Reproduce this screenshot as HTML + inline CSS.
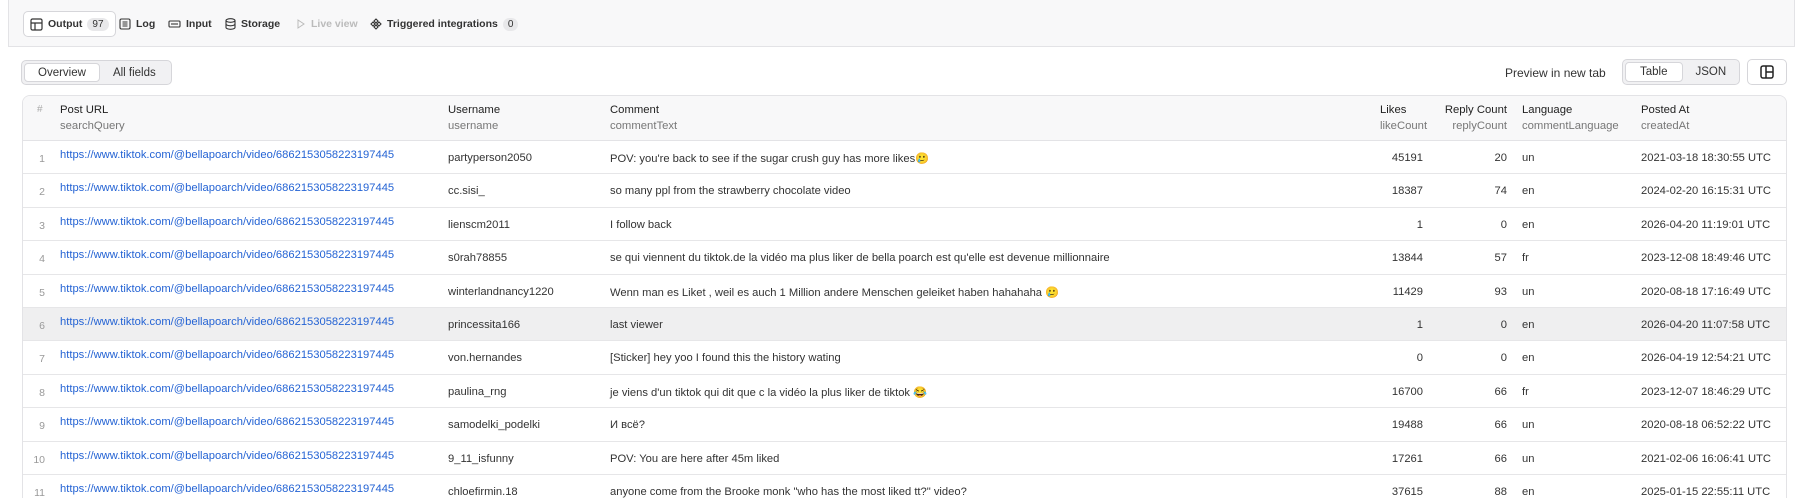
<!DOCTYPE html>
<html style="width:1800px;height:498px;overflow:hidden"><head><meta charset="utf-8"><style>
*{box-sizing:border-box;margin:0;padding:0}
body{width:1800px;height:498px;overflow:hidden;background:#fff;font-family:"Liberation Sans","Noto Sans CJK SC",sans-serif;color:#333;position:relative}
.top{position:absolute;left:8px;top:0;width:1787px;height:47px;background:#f8f8f9;border-left:1px solid #e3e3e6;border-right:1px solid #e3e3e6;border-bottom:1px solid #e3e3e6}
.tab{position:absolute;top:11px;height:26px;display:flex;align-items:center;font-size:10.5px;font-weight:bold;color:#333;gap:5px}
.tab.act{border:1px solid #d6d6da;border-radius:5px;background:#fff;padding:0 6px}
.badge{background:#e8e8ea;border-radius:8px;padding:1px 5px;font-weight:normal;font-size:10px}
.seg{position:absolute;border:1px solid #d6d6da;border-radius:5px;background:#f1f1f3;display:flex;padding:2px;font-size:11.5px}
.seg div{padding:0 13px;display:flex;align-items:center}
.seg .on{background:#fff;border:1px solid #d6d6da;border-radius:4px}
.tbl{position:absolute;left:22px;top:95px;width:1765px;height:403px;border:1px solid #e3e3e6;border-bottom:none;border-radius:8px 8px 0 0;overflow:hidden}
.hdr{position:absolute;left:0;top:0;width:100%;height:45px;background:#f8f8f9;border-bottom:1px solid #e3e3e6}
.c{position:absolute;white-space:nowrap;font-size:11.2px}
.h1{font-size:11.3px;color:#222;top:8px}
.h2{font-size:11.3px;color:#777;top:24px}
.row{position:absolute;left:0;width:100%;height:33.4px;border-bottom:1px solid #e6e6e8}
.row .c{top:11px}
.n{color:#999;font-size:10.5px;text-align:right;width:22px;left:0}
a{color:#2463d4;text-decoration:none}
.r{text-align:right}
</style></head><body>
<div class="top">
 <div class="tab act" style="left:14px"><svg width="13" height="13" viewBox="0 0 13 13" fill="none" stroke="#333" stroke-width="1.2"><rect x="1" y="1" width="11" height="11" rx="1.5"/><path d="M1 5h11M5 5v7"/></svg>Output <span class="badge">97</span></div>
 <div class="tab" style="left:110px"><svg width="12" height="12" viewBox="0 0 12 12" fill="none" stroke="#333" stroke-width="1.1"><rect x="1" y="1" width="10" height="10" rx="1.5"/><path d="M3.5 4h5M3.5 6h5M3.5 8h5"/></svg>Log</div>
 <div class="tab" style="left:159px"><svg width="13" height="12" viewBox="0 0 13 12" fill="none" stroke="#333" stroke-width="1.1"><rect x="1" y="3" width="11" height="6" rx="1"/><path d="M3 6h7"/></svg>Input</div>
 <div class="tab" style="left:216px"><svg width="11" height="12" viewBox="0 0 11 12" fill="none" stroke="#333" stroke-width="1.1"><ellipse cx="5.5" cy="2.5" rx="4.5" ry="1.8"/><path d="M1 2.5v7c0 1 2 1.8 4.5 1.8s4.5-.8 4.5-1.8v-7M1 6c0 1 2 1.8 4.5 1.8S10 7 10 6"/></svg>Storage</div>
 <div class="tab" style="left:287px;color:#bbb"><svg width="10" height="10" viewBox="0 0 10 10" fill="none" stroke="#bbb"><path d="M2 1l6 4-6 4z"/></svg>Live view</div>
 <div class="tab" style="left:361px"><svg width="12" height="12" viewBox="0 0 12 12" fill="none" stroke="#333" stroke-width="1.1"><path d="M6 1l2 2-2 2-2-2zM3 4l2 2-2 2-2-2zM9 4l2 2-2 2-2-2zM6 7l2 2-2 2-2-2z"/></svg>Triggered integrations <span class="badge">0</span></div>
</div>
<div class="seg" style="left:21px;top:60px;height:25px"><div class="on">Overview</div><div>All fields</div></div>
<div style="position:absolute;left:1505px;top:66px;font-size:12px">Preview in new tab</div>
<div class="seg" style="left:1622px;top:59px;height:26px;width:118px"><div class="on" style="padding:0 14px">Table</div><div>JSON</div></div>
<div style="position:absolute;left:1747px;top:59px;width:40px;height:26px;border:1px solid #d6d6da;border-radius:5px;display:flex;align-items:center;justify-content:center"><svg width="14" height="14" viewBox="0 0 14 14" fill="none" stroke="#222" stroke-width="1.5"><rect x="1" y="1" width="12" height="12" rx="2"/><path d="M6 1v12M6 7h7"/></svg></div>
<div class="tbl">
 <div class="hdr">
  <div class="c h1" style="left:14px;color:#aaa;font-size:10px;top:8px">#</div>
  <div class="c h1" style="left:37px">Post URL</div><div class="c h2" style="left:37px">searchQuery</div>
  <div class="c h1" style="left:425px">Username</div><div class="c h2" style="left:425px">username</div>
  <div class="c h1" style="left:587px">Comment</div><div class="c h2" style="left:587px">commentText</div>
  <div class="c h1" style="left:1357px">Likes</div><div class="c h2" style="left:1357px">likeCount</div>
  <div class="c h1 r" style="right:279px">Reply Count</div><div class="c h2 r" style="right:279px">replyCount</div>
  <div class="c h1" style="left:1499px">Language</div><div class="c h2" style="left:1499px">commentLanguage</div>
  <div class="c h1" style="left:1618px">Posted At</div><div class="c h2" style="left:1618px">createdAt</div>
 </div>
 <div id="rows"></div>
</div>
<script>
var d=[["partyperson2050","POV: you're back to see if the sugar crush guy has more likes\u{1F972}","45191","20","un","2021-03-18 18:30:55 UTC"],
["cc.sisi_","so many ppl from the strawberry chocolate video","18387","74","en","2024-02-20 16:15:31 UTC"],
["lienscm2011","I follow back","1","0","en","2026-04-20 11:19:01 UTC"],
["s0rah78855","se qui viennent du tiktok.de la vidéo ma plus liker de bella poarch est qu'elle est devenue millionnaire","13844","57","fr","2023-12-08 18:49:46 UTC"],
["winterlandnancy1220","Wenn man es Liket , weil es auch 1 Million andere Menschen geleiket haben hahahaha \u{1F972}","11429","93","un","2020-08-18 17:16:49 UTC"],
["princessita166","last viewer","1","0","en","2026-04-20 11:07:58 UTC"],
["von.hernandes","[Sticker] hey yoo I found this the history wating","0","0","en","2026-04-19 12:54:21 UTC"],
["paulina_rng","je viens d'un tiktok qui dit que c la vidéo la plus liker de tiktok \u{1F602}","16700","66","fr","2023-12-07 18:46:29 UTC"],
["samodelki_podelki","И всё?","19488","66","un","2020-08-18 06:52:22 UTC"],
["9_11_isfunny","POV: You are here after 45m liked","17261","66","un","2021-02-06 16:06:41 UTC"],
["chloefirmin.18","anyone come from the Brooke monk \"who has the most liked tt?\" video?","37615","88","en","2025-01-15 22:55:11 UTC"]];
var h="";
d.forEach(function(r,i){var t=45+i*33.4;
h+='<div class="row" style="top:'+t+'px;'+(i==5?'background:#efeff0':'')+'">'+
'<div class="c n" style="top:12px">'+(i+1)+'</div>'+
'<div class="c" style="left:37px;top:8px"><a>https://www.tiktok.com/@bellapoarch/video/6862153058223197445</a></div>'+
'<div class="c" style="left:425px">'+r[0]+'</div>'+
'<div class="c" style="left:587px">'+r[1].replace(/</g,"&lt;")+'</div>'+
'<div class="c r" style="right:363px">'+r[2]+'</div>'+
'<div class="c r" style="right:279px">'+r[3]+'</div>'+
'<div class="c" style="left:1499px">'+r[4]+'</div>'+
'<div class="c" style="left:1618px">'+r[5]+'</div></div>';});
document.getElementById("rows").innerHTML=h;
</script>
</body></html>
